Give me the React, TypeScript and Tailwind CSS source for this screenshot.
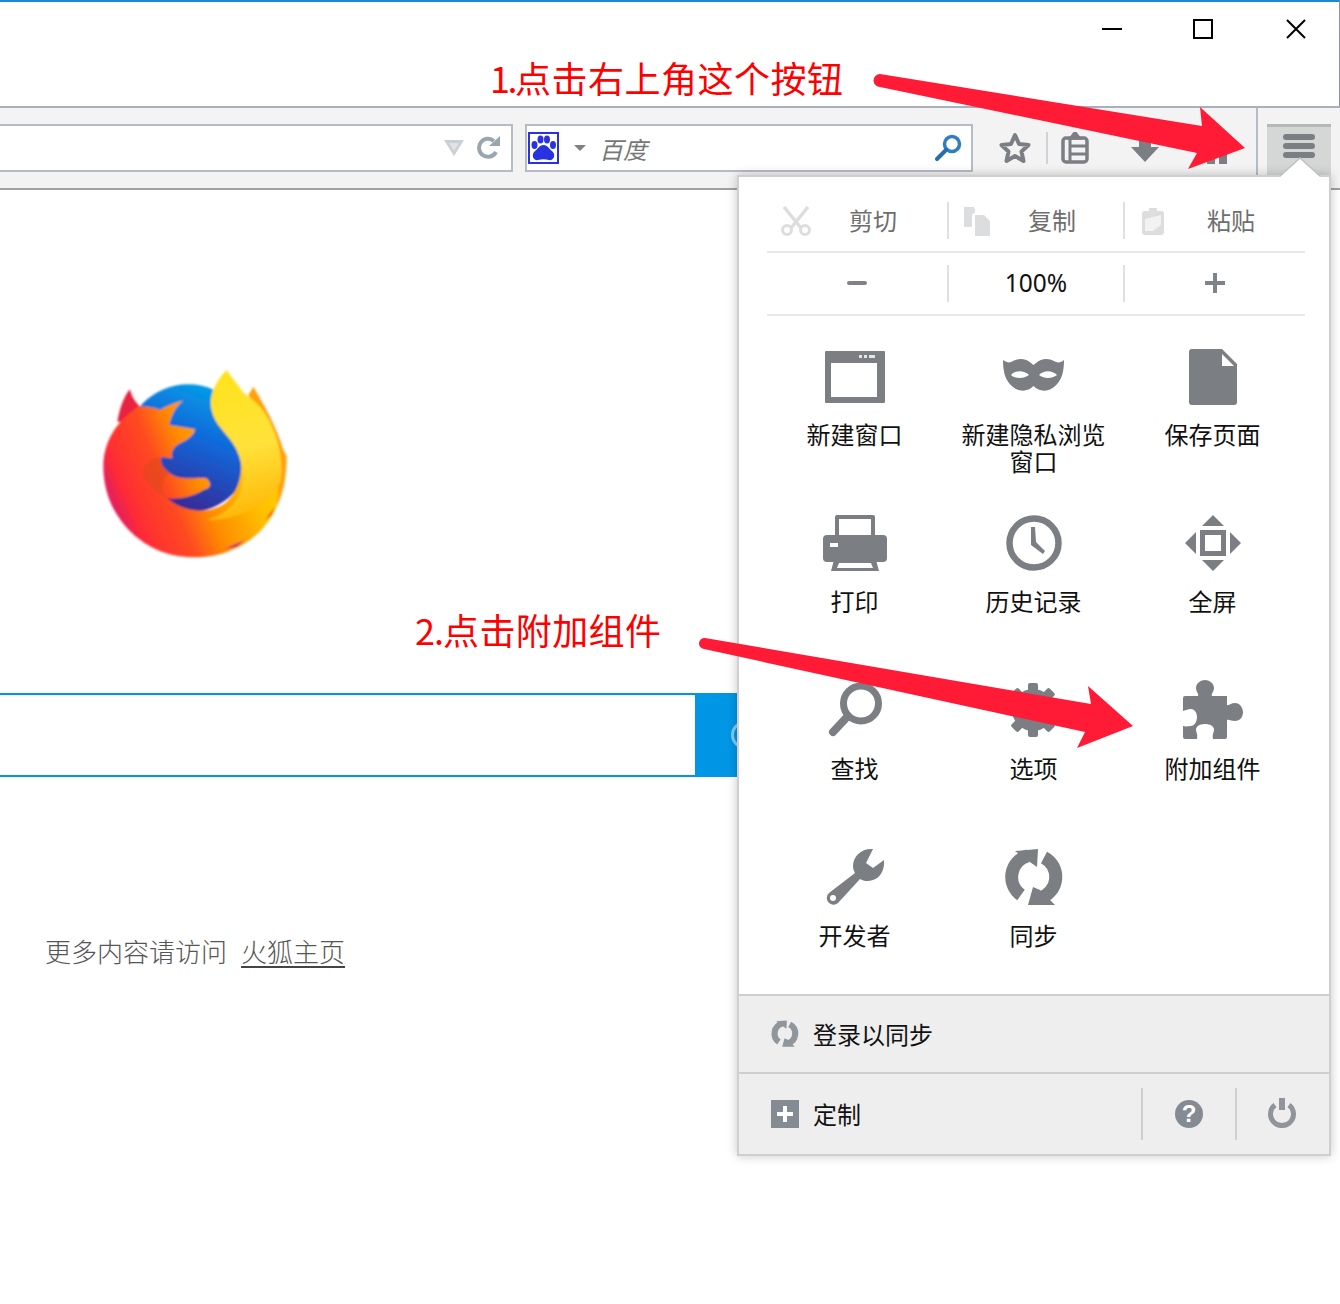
import type { ReactNode } from 'react';

const GRAY = '#7b7f83';
const DIM = '#dcddde';

const Ico = ({ children, size = 64, box = 64, color = GRAY }: { children: ReactNode; size?: number; box?: number; color?: string }) => (
  <svg width={size} height={size} viewBox={`0 0 ${box} ${box}`} fill={color} className="block shrink-0">
    {children}
  </svg>
);

const WindowIcon = () => (
  <Ico>
    <path fillRule="evenodd" d="M3 6h58a1 1 0 0 1 1 1v50a1 1 0 0 1-1 1H3a1 1 0 0 1-1-1V7a1 1 0 0 1 1-1zm5 12v34h46V18z" />
    <path fill="#e4e5e6" d="M36 10h3v3h-3zM41 10h3v3h-3zM46 10h6v3h-6z" />
  </Ico>
);

const MaskIcon = () => (
  <Ico>
    <path
      fillRule="evenodd"
      d="M1 15C5 18 8 18 11 16C16 13 24 13 29 18L31.5 20L34 18C39 13 47 13 52 16C55 18 59 18 62 15C62 26 60 36 52 42C46 47 37 47 31.5 41C26 47 17 47 11 42C3 36 1 26 1 15ZM9 30C13 25 22 25 27 30C22 34 13 34 9 30ZM37 30C42 25 50 25 55 30C50 34 42 34 37 30Z"
    />
  </Ico>
);

const PageIcon = () => (
  <Ico>
    <path d="M11 4H41L56 19V57a3 3 0 0 1-3 3H11a3 3 0 0 1-3-3V7a3 3 0 0 1 3-3z" />
    <path fill="#fff" d="M41 9V21H53z" />
  </Ico>
);

const PrinterIcon = () => (
  <Ico>
    <path fillRule="evenodd" d="M14 3H50a2 2 0 0 1 2 2V28H12V5a2 2 0 0 1 2-2zM16 7V26H48V7z" />
    <path d="M4 23H60a4 4 0 0 1 4 4V46a4 4 0 0 1-4 4H4a4 4 0 0 1-4-4V27a4 4 0 0 1 4-4z" />
    <path fill="#fff" d="M7 31H15V35H7z" />
    <path fillRule="evenodd" d="M11 48H53L56 59H8zM16 51L14 56H50L48 51z" />
  </Ico>
);

const ClockIcon = () => (
  <Ico>
    <circle cx="32" cy="31" r="24.500" fill="none" stroke={GRAY} strokeWidth="6.5" />
    <path d="M29 15H33L34 30L43 39L41 42L29 33z" />
  </Ico>
);

const FullscreenIcon = () => (
  <Ico>
    <path d="M32 3L21 14H43zM32 59L21 48H43zM4 31L15 20V42zM60 31L49 20V42z" />
    <rect x="21.500" y="20.500" width="21" height="21" fill="none" stroke={GRAY} strokeWidth="5" />
  </Ico>
);

const FindIcon = () => (
  <Ico>
    <circle cx="38" cy="24.500" r="17.500" fill="none" stroke={GRAY} strokeWidth="7" />
    <path d="M25 37L10 53" fill="none" stroke={GRAY} strokeWidth="8" strokeLinecap="round" />
  </Ico>
);

const GearIcon = () => (
  <Ico>
    {[0, 45, 90, 135, 180, 225, 270, 315].map((a) => (
      <rect key={a} x="26" y="4" width="10" height="12" rx="2" transform={`rotate(${a} 31 31)`} />
    ))}
    <circle cx="31" cy="31" r="21" />
    <circle cx="31" cy="31" r="10" fill="#fff" />
  </Ico>
);

const PuzzleIcon = () => (
  <Ico>
    <path d="M4 17H17C18 14 15 13 15 9C15 4 20 1 24 1C28 1 33 4 33 9C33 13 30 14 31 17H46V26C48 27 50 24 54 24C59 24 62 29 62 33C62 38 59 42 54 42C50 42 48 40 46 41V58a2 2 0 0 1-2 2H32C31 55 33 53 33 51C33 47 29 45 24 45C19 45 15 47 15 51C15 53 17 55 16 60H4a2 2 0 0 1-2-2V47C5 48 7 47 10 47C13 47 16 43 16 38C16 33 13 30 10 30C7 30 5 31 2 32V19a2 2 0 0 1 2-2Z" />
  </Ico>
);

const WrenchIcon = () => (
  <Ico>
    <path d="M50 3C39 2 30 10 30 20C30 23 31 25 32 27L6 47A6.5 6.5 0 1 0 15 57L37 33C40 35 45 36 50 34C57 32 62 24 61 14L50 22L43 17Z" />
    <circle cx="10" cy="52" r="3" fill="#fff" />
  </Ico>
);

const SyncIcon = ({ size = 64, color = GRAY }: { size?: number; color?: string }) => (
  <Ico size={size} color={color}>
    <path d="M19 49A22 22 0 0 1 26 9.800" fill="none" stroke={color} strokeWidth="13" />
    <path d="M13 5L36 3L35 21L25 14z" />
    <path d="M42 11.400A22 22 0 0 1 38 52" fill="none" stroke={color} strokeWidth="13" />
    <path d="M26 59H53L46 52L38 44L31 41z" />
  </Ico>
);

const ScissorsIcon = () => (
  <svg width="30" height="30" viewBox="0 0 30 30" fill="none" stroke={DIM} className="block shrink-0">
    <path d="M3 1L20 22M27 1L10 22" strokeWidth="3.500" />
    <circle cx="6" cy="24" r="4.500" strokeWidth="3" />
    <circle cx="24" cy="24" r="4.500" strokeWidth="3" />
  </svg>
);

const CopyIcon = () => (
  <svg width="30" height="30" viewBox="0 0 30 30" fill={DIM} className="block shrink-0">
    <path d="M2 1H12L13 4V7H12a3 3 0 0 0-2 3V21H2z" />
    <path d="M13 9H22L28 15V30H13z" />
  </svg>
);

const PasteIcon = () => (
  <svg width="30" height="30" viewBox="0 0 30 30" fill={DIM} className="block shrink-0">
    <path d="M11 2H19V5H23a3 3 0 0 1 3 3V26a3 3 0 0 1-3 3H7a3 3 0 0 1-3-3V8a3 3 0 0 1 3-3H11z" />
    <path fill="#f2f2f2" d="M7 13L23 9V19L15 25H7z" />
  </svg>
);

const MagnifierBlue = () => (
  <svg width="30" height="30" viewBox="0 0 30 30" fill="none" className="block">
    <circle cx="19" cy="11" r="7.500" stroke="#2f7fbe" strokeWidth="3.500" />
    <path d="M13 17L4 26" stroke="#2a6ea8" strokeWidth="4" strokeLinecap="round" />
  </svg>
);

const FirefoxLogo = () => (
  <svg width="230" height="230" viewBox="0 0 690 690" className="block">
    <defs>
      <linearGradient id="globe" x1="0.8" y1="0" x2="0.4" y2="1">
        <stop offset="0" stopColor="#00a6ea" />
        <stop offset="0.45" stopColor="#1266d8" />
        <stop offset="1" stopColor="#3a2390" />
      </linearGradient>
      <linearGradient id="body" x1="70" y1="520" x2="590" y2="300" gradientUnits="userSpaceOnUse">
        <stop offset="0" stopColor="#b0159a" />
        <stop offset="0.08" stopColor="#e01f60" />
        <stop offset="0.17" stopColor="#ff2b35" />
        <stop offset="0.38" stopColor="#ff4a20" />
        <stop offset="0.54" stopColor="#ff8a00" />
        <stop offset="0.8" stopColor="#ffc000" />
        <stop offset="1" stopColor="#ffd000" />
      </linearGradient>
      <linearGradient id="tail" x1="440" y1="60" x2="560" y2="520" gradientUnits="userSpaceOnUse">
        <stop offset="0" stopColor="#ffe21c" />
        <stop offset="0.5" stopColor="#ffe23a" />
        <stop offset="1" stopColor="#ffb000" />
      </linearGradient>
      <filter id="soft">
        <feGaussianBlur stdDeviation="2.500" />
      </filter>
    </defs>
    <g filter="url(#soft)">
      <circle cx="325" cy="295" r="192" fill="url(#globe)" />
      <path d="M112 215C118 180 130 140 150 118C155 140 165 155 180 170L150 215z" fill="#e8233f" />
      <path d="M505 135L520 110C550 160 590 230 610 300L620 318C620 380 610 430 590 470C600 380 560 230 505 135z" fill="#ffa010" />
      <path
        d="M310 152C285 158 255 170 240 180C220 172 195 168 175 170C105 215 70 280 70 350C70 500 190 622 340 622C480 622 560 540 590 470L600 330L480 320C490 360 480 420 440 455C400 490 320 495 262 445C290 450 340 440 370 420C395 415 395 400 380 385C350 380 300 395 270 370C250 355 240 340 243 322C255 320 270 325 278 325C270 310 280 290 300 280C325 270 345 250 345 238L268 225C272 195 290 165 310 152Z"
        fill="url(#body)"
      />
      <path d="M243 322C215 322 190 340 190 365C195 400 230 430 262 445C245 420 235 395 270 370C250 355 240 340 243 322Z" fill="#d8481c" opacity="0.5" />
      <path
        d="M440 60C405 95 385 140 395 180C405 230 450 255 470 300C490 345 500 400 470 450C440 490 410 500 380 510C470 510 560 470 600 400C615 330 590 230 540 170C520 145 490 135 478 110C465 95 450 75 440 60Z"
        fill="url(#tail)"
      />
      <path d="M430 598L495 570L470 590z" fill="#c4206a" />
      <path d="M555 510L585 470L575 495z" fill="#e84a20" />
    </g>
  </svg>
);

const menuItems = [
  { label: '新建窗口', icon: <WindowIcon /> },
  { label: '新建隐私浏览窗口', icon: <MaskIcon /> },
  { label: '保存页面', icon: <PageIcon /> },
  { label: '打印', icon: <PrinterIcon /> },
  { label: '历史记录', icon: <ClockIcon /> },
  { label: '全屏', icon: <FullscreenIcon /> },
  { label: '查找', icon: <FindIcon /> },
  { label: '选项', icon: <GearIcon /> },
  { label: '附加组件', icon: <PuzzleIcon /> },
  { label: '开发者', icon: <WrenchIcon /> },
  { label: '同步', icon: <SyncIcon /> },
];

const Divider = () => <div className="h-[37px] w-[2px] shrink-0 bg-[#e0e0e0]" />;

const Menu = () => (
  <div className="absolute left-[737px] top-[175px] h-[981px] w-[594px] border-2 border-[#cfcfcf] bg-white shadow-[0_0_10px_rgba(0,0,0,0.22)]">
    <svg width="40" height="20" viewBox="0 0 40 20" className="absolute left-[541px] top-[-20px]">
      <path d="M0 20L20 1L40 20z" fill="#fff" />
      <path d="M0 19L20 1L40 19" fill="none" stroke="#bfc2c2" strokeWidth="1.5" />
    </svg>

    <div className="h-[139px] pl-[28px] pr-[24px] pt-[13px]">
      <div className="flex h-[61px] items-center text-[#6e6e6e]">
        <div className="flex w-[180px] items-center pl-[14px]">
          <ScissorsIcon />
          <span className="-mt-[2px] ml-[38px]">剪切</span>
        </div>
        <Divider />
        <div className="flex w-[174px] items-center pl-[13px]">
          <CopyIcon />
          <span className="-mt-[2px] ml-[36px]">复制</span>
        </div>
        <Divider />
        <div className="flex w-[180px] items-center pl-[13px]">
          <PasteIcon />
          <span className="-mt-[2px] ml-[39px]">粘贴</span>
        </div>
      </div>
      <div className="h-[2px] bg-[#e8e8e8]" />
      <div className="flex h-[61px] items-center">
        <div className="flex w-[180px] justify-center">
          <div className="-mt-[1px] h-[4px] w-[20px] rounded-sm bg-[#7f8387]" />
        </div>
        <Divider />
        <div className="-mt-[2px] w-[174px] text-center text-[24.5px] font-['Noto_Sans',sans-serif]">100%</div>
        <Divider />
        <div className="flex w-[180px] justify-center">
          <svg width="20" height="20" viewBox="0 0 20 20" fill="#7f8387" className="-mt-[1px] block">
            <path d="M8 0h4v8h8v4h-8v8H8v-8H0V8h8z" />
          </svg>
        </div>
      </div>
      <div className="h-[2px] bg-[#e8e8e8]" />
    </div>

    <div className="mt-[29px] grid h-[649px] grid-cols-[179px_179px_179px] grid-rows-[167px_167px_167px_148px] pl-[26px]">
      {menuItems.map((item) => (
        <div key={item.label} className="flex flex-col items-center">
          {item.icon}
          <div className="mt-[11px] w-[150px] text-center">{item.label}</div>
        </div>
      ))}
    </div>

    <div className="border-t-2 border-[#cfcfcf] bg-[#eeeeee]">
      <div className="flex h-[76px] items-center pl-[31px]">
        <SyncIcon size={30} color="#8f969c" />
        <span className="-mt-[2px] ml-[13px] whitespace-nowrap">登录以同步</span>
      </div>
      <div className="flex h-[82px] items-center border-t-2 border-[#cfcfcf] pl-[32px]">
        <svg width="28" height="28" viewBox="0 0 28 28" className="block shrink-0">
          <rect width="28" height="28" fill="#858b92" />
          <path d="M12 6h4v6h6v4h-6v6h-4v-6H6v-4h6z" fill="#fff" />
        </svg>
        <span className="-mt-[1px] ml-[14px] whitespace-nowrap">定制</span>
        <div className="ml-[280px] h-[52px] w-[2px] shrink-0 bg-[#cfcfcf]" />
        <div className="flex w-[92px] shrink-0 justify-center">
          <div className="flex h-[28px] w-[28px] items-center justify-center rounded-full bg-[#858b92] text-[24px] font-bold leading-none text-white font-['Liberation_Sans',sans-serif]">
            ?
          </div>
        </div>
        <div className="h-[52px] w-[2px] shrink-0 bg-[#cfcfcf]" />
        <div className="flex w-[90px] shrink-0 justify-center">
          <svg width="30" height="30" viewBox="0 0 30 30" fill="none" stroke="#8f959b" className="-mt-[2px] block">
            <path d="M8 7A11.500 11.500 0 1 0 22 7" strokeWidth="5" />
            <path d="M15 0V12" strokeWidth="6" />
          </svg>
        </div>
      </div>
    </div>
  </div>
);

const Annotations = () => (
  <>
    <svg width="1340" height="1304" viewBox="0 0 1340 1304" className="pointer-events-none absolute left-0 top-0" fill="#ff1a36">
      <path d="M880 74L1202 126L1200 107L1245 148L1188 169L1197 153L880 87A6.5 6.5 0 0 1 880 74Z" />
      <path d="M705 638L1091 704L1088 686L1133 726L1077 748L1085 732L704 649A5.5 5.5 0 0 1 705 638Z" />
    </svg>
    <div className="absolute left-[490px] top-[51px] text-[36px] leading-[52px] text-[#ff0000]">
      <span className="tracking-[-2.5px]">1.</span>
      <span className="tracking-[0.5px]">点击右上角这个按钮</span>
    </div>
    <div className="absolute left-[415px] top-[603px] text-[36px] leading-[52px] text-[#ff0000]">
      <span className="tracking-[-1px]">2.</span>
      <span className="tracking-[0.4px]">点击附加组件</span>
    </div>
  </>
);

export default function App() {
  return (
    <div className="relative h-[1304px] w-[1340px] overflow-hidden bg-white text-[24px] leading-[27px] text-[#111] font-['Noto_Sans_CJK_SC','Noto_Sans',sans-serif]">
      <div className="flex h-[106px] justify-end border-r border-t-2 border-r-[#8a949e] border-t-[#1e88d4] pr-[33px] pt-[17px]">
        <div className="mt-[9px] h-[2px] w-[20px] bg-black" />
        <div className="ml-[71px] h-[20px] w-[20px] border-2 border-black" />
        <svg width="20" height="20" viewBox="0 0 20 20" className="ml-[73px] block" stroke="#000" strokeWidth="2">
          <path d="M1 1L19 19M19 1L1 19" />
        </svg>
      </div>

      <div className="flex h-[84px] items-center border-y-2 border-b-[#a0a0a0] border-t-[#a9afbb] bg-[#f3f3f3]">
        <div className="flex h-[48px] w-[513px] shrink-0 items-center justify-end border-y-2 border-r-2 border-[#b5bcc6] bg-white pr-[10px]">
          <svg width="20" height="16" viewBox="0 0 20 16" className="mr-[13px] block">
            <path d="M0 0H20L10 16z" fill="#c8d0d6" />
            <path d="M5 3H15L10 11z" fill="#dde3e7" />
          </svg>
          <svg width="24" height="24" viewBox="0 0 24 24" fill="none" className="block">
            <path d="M19 16A9 9 0 1 1 17 5" stroke="#9aa6ae" strokeWidth="4" />
            <path d="M12 10H23V0z" fill="#9aa6ae" />
          </svg>
        </div>

        <div className="ml-[12px] flex h-[48px] w-[448px] shrink-0 items-center border-2 border-[#b5bcc6] bg-white pl-[1px] pr-[8px]">
          <svg width="31" height="32" viewBox="0 0 31 32" className="block shrink-0">
            <rect x="1" y="1" width="29" height="30" fill="#fff" stroke="#2932e1" strokeWidth="2" />
            <g fill="#2932e1">
              <ellipse cx="6.500" cy="13" rx="3" ry="4" />
              <ellipse cx="12.500" cy="7.500" rx="3" ry="4" />
              <ellipse cx="19" cy="7.500" rx="3" ry="4" />
              <ellipse cx="25" cy="13" rx="3" ry="4" />
              <path d="M15.500 13C20 13 21 17 25 20C28 24 25 29 21 28C17 27 14 27 10 28C6 29 3 24 6 20C10 17 11 13 15.500 13Z" />
            </g>
          </svg>
          <div className="ml-[15px] h-0 w-0 border-x-[6px] border-t-[6px] border-x-transparent border-t-[#808080]" />
          <span className="ml-[13px] italic text-[#777]">百度</span>
          <div className="ml-auto">
            <MagnifierBlue />
          </div>
        </div>

        <svg width="32" height="32" viewBox="0 0 32 32" className="ml-[26px] block shrink-0" fill="none" stroke={GRAY} strokeWidth="4" strokeLinejoin="round">
          <path d="M16 3L20 12L29.500 13L22.500 19.500L24.500 29L16 24L7.500 29L9.500 19.500L2.500 13L12 12Z" />
        </svg>
        <div className="ml-[15px] h-[32px] w-[2px] shrink-0 bg-[#d0d4d8]" />
        <svg width="28" height="32" viewBox="0 0 28 32" className="ml-[13px] block shrink-0" fill="none" stroke={GRAY} strokeWidth="3.500">
          <rect x="2" y="6" width="24" height="24" rx="3" />
          <path d="M9 6V30M9 14H26M9 22H26" strokeWidth="3" />
          <path d="M10 6L14 1L18 6z" fill={GRAY} />
        </svg>
        <svg width="28" height="28" viewBox="0 0 28 28" className="ml-[42px] block shrink-0" fill={GRAY}>
          <path d="M8 0H20V13H28L14 28L0 13H8z" />
        </svg>
        <svg width="28" height="28" viewBox="0 0 28 28" className="ml-[44px] mt-[8px] block shrink-0" fill={GRAY}>
          <path d="M14 2L28 14H24V26H16V18H12V26H4V14H0z" />
        </svg>
        <div className="ml-[25px] h-[68px] w-[2px] shrink-0 self-start bg-[#b4bcc4]" />
        <div className="ml-[9px] mt-[16px] flex h-[52px] w-[64px] shrink-0 flex-col items-center gap-[3px] self-start border-t-[3px] border-[#b5b8b8] bg-[#d5d7d6] pt-[7px]">
          <div className="h-[6px] w-[32px] rounded-full bg-[#7b7f83]" />
          <div className="h-[6px] w-[32px] rounded-full bg-[#7b7f83]" />
          <div className="h-[6px] w-[32px] rounded-full bg-[#7b7f83]" />
        </div>
      </div>

      <div className="pl-[80px] pt-[160px]">
        <FirefoxLogo />
      </div>

      <div className="mt-[113px] flex h-[84px] w-[760px]">
        <div className="w-[695px] border-y-2 border-[#0096e6]" />
        <div className="flex flex-1 items-center bg-[#0096e6] pl-[36px]">
          <div className="h-[28px] w-[28px] shrink-0 rounded-full border-[3px] border-white/50" />
        </div>
      </div>

      <div className="ml-[45px] mt-[156px] flex text-[26px] font-light leading-[36px] text-[#555]">
        <span>更多内容请访问</span>
        <span className="ml-[14px] underline decoration-[#444] decoration-[1.5px] underline-offset-4">火狐主页</span>
      </div>

      <Menu />
      <Annotations />
    </div>
  );
}
